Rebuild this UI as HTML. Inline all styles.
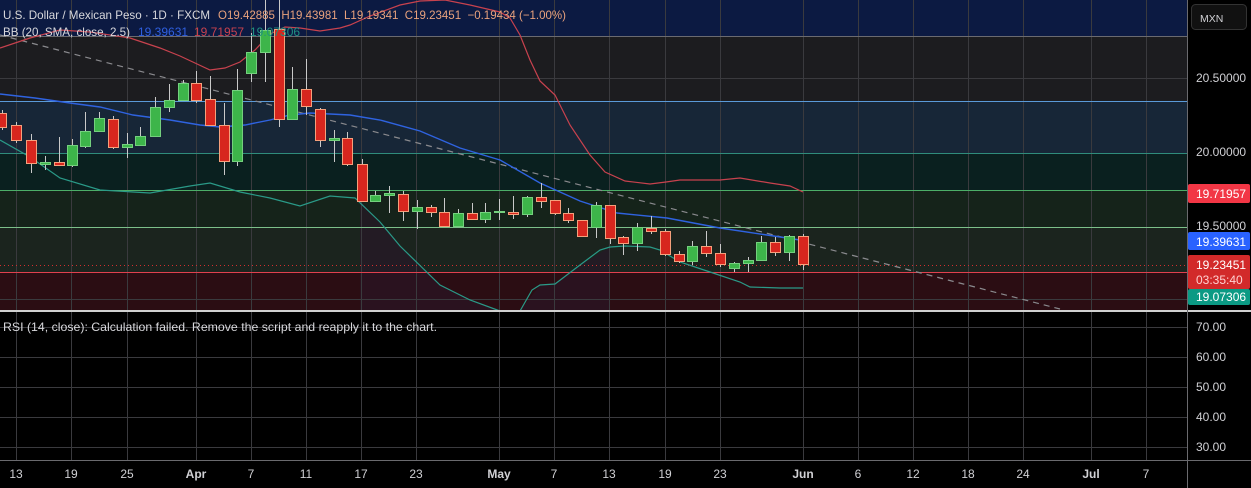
<!DOCTYPE html>
<html><head><meta charset="utf-8"><style>
html,body{margin:0;padding:0;background:#000;width:1251px;height:488px;overflow:hidden}
svg{display:block;font-family:"Liberation Sans",sans-serif}
</style></head><body>
<svg width="1251" height="488" viewBox="0 0 1251 488">
<rect x="0" y="0" width="1187" height="36" fill="#0c1a42"/>
<rect x="0" y="36" width="1187" height="66" fill="#1c1c1f"/>
<rect x="0" y="102" width="1187" height="51" fill="#172637"/>
<rect x="0" y="153" width="1187" height="37" fill="#0a201f"/>
<rect x="0" y="190" width="1187" height="37" fill="#15231a"/>
<rect x="0" y="227" width="1187" height="45" fill="#1b241e"/>
<rect x="0" y="272" width="1187" height="39" fill="#2b0d13"/>
<path d="M360,200 L400,246 440,285 470,300 500,311 520,311 540,285 555,284 580,265 610,247 L610,311 360,311Z" fill="#2a1628" opacity="0.6"/>
<g stroke="#3a3a3e" stroke-width="1">
<line x1="16.5" y1="0" x2="16.5" y2="460"/><line x1="71.5" y1="0" x2="71.5" y2="460"/><line x1="127.5" y1="0" x2="127.5" y2="460"/><line x1="196.5" y1="0" x2="196.5" y2="460"/><line x1="251.5" y1="0" x2="251.5" y2="460"/><line x1="306.5" y1="0" x2="306.5" y2="460"/><line x1="361.5" y1="0" x2="361.5" y2="460"/><line x1="416.5" y1="0" x2="416.5" y2="460"/><line x1="499.5" y1="0" x2="499.5" y2="460"/><line x1="554.5" y1="0" x2="554.5" y2="460"/><line x1="609.5" y1="0" x2="609.5" y2="460"/><line x1="665.5" y1="0" x2="665.5" y2="460"/><line x1="720.5" y1="0" x2="720.5" y2="460"/><line x1="803.5" y1="0" x2="803.5" y2="460"/><line x1="858.5" y1="0" x2="858.5" y2="460"/><line x1="913.5" y1="0" x2="913.5" y2="460"/><line x1="968.5" y1="0" x2="968.5" y2="460"/><line x1="1023.5" y1="0" x2="1023.5" y2="460"/><line x1="1091.5" y1="0" x2="1091.5" y2="460"/><line x1="1146.5" y1="0" x2="1146.5" y2="460"/>
<line x1="0" y1="78.5" x2="1187" y2="78.5"/><line x1="0" y1="299.5" x2="1187" y2="299.5"/>
<line x1="0" y1="327.5" x2="1187" y2="327.5"/><line x1="0" y1="357.5" x2="1187" y2="357.5"/><line x1="0" y1="387.5" x2="1187" y2="387.5"/><line x1="0" y1="417.5" x2="1187" y2="417.5"/><line x1="0" y1="447.5" x2="1187" y2="447.5"/>
</g>
<line x1="0" y1="36.5" x2="1187" y2="36.5" stroke="#6a6a70"/>
<line x1="0" y1="101.5" x2="1187" y2="101.5" stroke="#5a9ad8"/>
<line x1="0" y1="153.5" x2="1187" y2="153.5" stroke="#2f8c7c"/>
<line x1="0" y1="190.5" x2="1187" y2="190.5" stroke="#4cae68"/>
<line x1="0" y1="227.5" x2="1187" y2="227.5" stroke="#7cc08a"/>
<line x1="0" y1="272.5" x2="1187" y2="272.5" stroke="#e0404e"/>
<line x1="0" y1="265.5" x2="1187" y2="265.5" stroke="#d32f2f" stroke-dasharray="1,3"/>
<line x1="0" y1="35" x2="1060" y2="309" stroke="#8a8a8e" stroke-width="1.2" stroke-dasharray="6,5"/>
<polyline fill="none" stroke="#c8424e" stroke-width="1.2" points="0,48 30,38 60,30 90,32 130,38 160,48 180,56 210,70 225,68 240,62 255,50 270,34 285,27 300,28 320,31 340,28 350,25 370,16 400,5 420,1 445,0 470,5 500,12 510,18 520,35 530,60 540,81 555,95 570,125 590,155 605,172 625,181 650,184 666,182 680,180 720,180 740,178 770,183 790,186 803,192"/>
<polyline fill="none" stroke="#2f63e0" stroke-width="1.4" points="0,94 35,98 70,103 100,107 133,115 170,120 200,125 220,127 245,125 270,120 290,115 310,113 350,115 380,120 420,131 460,148 500,160 540,183 580,201 617,213 667,218 720,228 767,235 800,240"/>
<polyline fill="none" stroke="#2a9a88" stroke-width="1.2" points="0,140 30,157 60,178 100,190 150,193 190,186 210,183 240,192 270,198 300,206 330,196 355,198 380,222 400,246 440,285 470,300 500,311 520,311 532,290 540,285 555,284 580,265 600,250 610,247 625,246 650,247 660,250 680,262 710,272 740,282 750,287 780,288 803,288"/>
<g>
<g stroke="#c9c9c9">
<line x1="2.5" y1="110" x2="2.5" y2="130"/><line x1="16.5" y1="122" x2="16.5" y2="143"/><line x1="31.5" y1="134" x2="31.5" y2="173"/><line x1="45.5" y1="156" x2="45.5" y2="170"/><line x1="59.5" y1="137" x2="59.5" y2="166"/><line x1="72.5" y1="139" x2="72.5" y2="167"/><line x1="85.5" y1="112" x2="85.5" y2="148"/><line x1="99.5" y1="112" x2="99.5" y2="132"/><line x1="113.5" y1="116" x2="113.5" y2="149"/><line x1="127.5" y1="133" x2="127.5" y2="158"/><line x1="140.5" y1="127" x2="140.5" y2="146"/><line x1="155.5" y1="97" x2="155.5" y2="137"/><line x1="169.5" y1="84" x2="169.5" y2="112"/><line x1="183.5" y1="80" x2="183.5" y2="101"/><line x1="196.5" y1="71" x2="196.5" y2="103"/><line x1="210.5" y1="76" x2="210.5" y2="126"/><line x1="224.5" y1="103" x2="224.5" y2="175"/><line x1="237.5" y1="69" x2="237.5" y2="166"/><line x1="251.5" y1="33" x2="251.5" y2="82"/><line x1="265.5" y1="0" x2="265.5" y2="82"/><line x1="279.5" y1="0" x2="279.5" y2="127"/><line x1="292.5" y1="67" x2="292.5" y2="119"/><line x1="306.5" y1="59" x2="306.5" y2="115"/><line x1="320.5" y1="108" x2="320.5" y2="147"/><line x1="334.5" y1="130" x2="334.5" y2="162"/><line x1="347.5" y1="132" x2="347.5" y2="166"/><line x1="362.5" y1="159" x2="362.5" y2="202"/><line x1="375.5" y1="191" x2="375.5" y2="202"/><line x1="389.5" y1="186" x2="389.5" y2="213"/><line x1="403.5" y1="191" x2="403.5" y2="221"/><line x1="417.5" y1="200" x2="417.5" y2="229"/><line x1="431.5" y1="205" x2="431.5" y2="217"/><line x1="444.5" y1="198" x2="444.5" y2="227"/><line x1="458.5" y1="209" x2="458.5" y2="227"/><line x1="472.5" y1="203" x2="472.5" y2="220"/><line x1="485.5" y1="203" x2="485.5" y2="223"/><line x1="499.5" y1="199" x2="499.5" y2="220"/><line x1="513.5" y1="196" x2="513.5" y2="219"/><line x1="527.5" y1="196" x2="527.5" y2="217"/><line x1="541.5" y1="183" x2="541.5" y2="208"/><line x1="555.5" y1="200" x2="555.5" y2="215"/><line x1="568.5" y1="208" x2="568.5" y2="223"/><line x1="582.5" y1="220" x2="582.5" y2="237"/><line x1="596.5" y1="202" x2="596.5" y2="238"/><line x1="610.5" y1="205" x2="610.5" y2="244"/><line x1="623.5" y1="236" x2="623.5" y2="255"/><line x1="637.5" y1="223" x2="637.5" y2="251"/><line x1="651.5" y1="216" x2="651.5" y2="234"/><line x1="665.5" y1="229" x2="665.5" y2="256"/><line x1="679.5" y1="251" x2="679.5" y2="263"/><line x1="692.5" y1="241" x2="692.5" y2="265"/><line x1="706.5" y1="231" x2="706.5" y2="257"/><line x1="720.5" y1="244" x2="720.5" y2="267"/><line x1="734.5" y1="262" x2="734.5" y2="272"/><line x1="748.5" y1="257" x2="748.5" y2="272"/><line x1="761.5" y1="236" x2="761.5" y2="261"/><line x1="775.5" y1="237" x2="775.5" y2="256"/><line x1="789.5" y1="235" x2="789.5" y2="261"/><line x1="803.5" y1="234" x2="803.5" y2="270"/>
</g>
<g fill="#3db54a" stroke="#74d07e">
<rect x="40.5" y="162.5" width="10" height="2"/><rect x="67.5" y="145.5" width="10" height="20"/><rect x="80.5" y="131.5" width="10" height="15"/><rect x="94.5" y="118.5" width="10" height="13"/><rect x="122.5" y="144.5" width="10" height="3"/><rect x="135.5" y="136.5" width="10" height="9"/><rect x="150.5" y="107.5" width="10" height="29"/><rect x="164.5" y="100.5" width="10" height="7"/><rect x="178.5" y="83.5" width="10" height="17"/><rect x="232.5" y="90.5" width="10" height="71"/><rect x="246.5" y="52.5" width="10" height="21"/><rect x="260.5" y="30.5" width="10" height="22"/><rect x="287.5" y="89.5" width="10" height="30"/><rect x="329.5" y="138.5" width="10" height="2"/><rect x="370.5" y="195.5" width="10" height="6"/><rect x="384.5" y="193.5" width="10" height="2"/><rect x="412.5" y="207.5" width="10" height="4"/><rect x="453.5" y="213.5" width="10" height="13"/><rect x="480.5" y="212.5" width="10" height="7"/><rect x="494.5" y="211.5" width="10" height="1"/><rect x="522.5" y="197.5" width="10" height="17"/><rect x="591.5" y="205.5" width="10" height="22"/><rect x="632.5" y="227.5" width="10" height="16"/><rect x="687.5" y="246.5" width="10" height="15"/><rect x="729.5" y="263.5" width="10" height="5"/><rect x="743.5" y="260.5" width="10" height="3"/><rect x="756.5" y="242.5" width="10" height="18"/><rect x="784.5" y="236.5" width="10" height="16"/>
</g>
<g fill="#d7261e" stroke="#f5a07c">
<rect x="-3.5" y="113.5" width="10" height="14"/><rect x="11.5" y="125.5" width="10" height="15"/><rect x="26.5" y="140.5" width="10" height="23"/><rect x="54.5" y="162.5" width="10" height="3"/><rect x="108.5" y="119.5" width="10" height="28"/><rect x="191.5" y="83.5" width="10" height="17"/><rect x="205.5" y="99.5" width="10" height="26"/><rect x="219.5" y="125.5" width="10" height="36"/><rect x="274.5" y="29.5" width="10" height="90"/><rect x="301.5" y="89.5" width="10" height="17"/><rect x="315.5" y="109.5" width="10" height="31"/><rect x="342.5" y="138.5" width="10" height="26"/><rect x="357.5" y="164.5" width="10" height="37"/><rect x="398.5" y="194.5" width="10" height="17"/><rect x="426.5" y="207.5" width="10" height="5"/><rect x="439.5" y="212.5" width="10" height="14"/><rect x="467.5" y="213.5" width="10" height="6"/><rect x="508.5" y="212.5" width="10" height="2"/><rect x="536.5" y="197.5" width="10" height="4"/><rect x="550.5" y="200.5" width="10" height="13"/><rect x="563.5" y="213.5" width="10" height="7"/><rect x="577.5" y="220.5" width="10" height="16"/><rect x="605.5" y="205.5" width="10" height="33"/><rect x="618.5" y="237.5" width="10" height="6"/><rect x="646.5" y="228.5" width="10" height="3"/><rect x="660.5" y="231.5" width="10" height="23"/><rect x="674.5" y="254.5" width="10" height="7"/><rect x="701.5" y="246.5" width="10" height="7"/><rect x="715.5" y="253.5" width="10" height="11"/><rect x="770.5" y="242.5" width="10" height="10"/><rect x="798.5" y="236.5" width="10" height="28"/>
</g>
</g>
<g font-size="12">
<text x="3" y="19" fill="#d8d8dc" textLength="207" lengthAdjust="spacingAndGlyphs">U.S. Dollar / Mexican Peso · 1D · FXCM</text>
<text x="218" y="19" fill="#e9a27d" xml:space="preserve" textLength="348" lengthAdjust="spacingAndGlyphs">O19.42885  H19.43981  L19.19341  C19.23451  −0.19434 (−1.00%)</text>
<text x="3" y="36" fill="#d8d8dc" textLength="127" lengthAdjust="spacingAndGlyphs">BB (20, SMA, close, 2.5)</text>
<text x="138" y="36" fill="#2f5fe0">19.39631</text>
<text x="194" y="36" fill="#c8424e">19.71957</text>
<text x="250" y="36" fill="#1f9080">19.07306</text>
<text x="3" y="331" fill="#d8d8dc" font-size="12" textLength="434" lengthAdjust="spacingAndGlyphs">RSI (14, close): Calculation failed. Remove the script and reapply it to the chart.</text>
</g>
<rect x="0" y="310" width="1251" height="2" fill="#d0d0d0"/>
<line x1="0" y1="460.5" x2="1251" y2="460.5" stroke="#6a6a6e"/>
<rect x="1188" y="0" width="63" height="310" fill="#000"/>
<rect x="1188" y="312" width="63" height="148" fill="#000"/>
<line x1="1187.5" y1="0" x2="1187.5" y2="488" stroke="#6a6a6e"/>
<rect x="1191.5" y="4.5" width="55" height="25" rx="4" fill="#111" stroke="#333"/>
<g font-size="12" fill="#d0d0d4">
<text x="1200" y="22" font-size="10.5">MXN</text>
<text x="1196" y="82">20.50000</text>
<text x="1196" y="156">20.00000</text>
<text x="1196" y="230">19.50000</text>
<text x="1196" y="331">70.00</text>
<text x="1196" y="361">60.00</text>
<text x="1196" y="391">50.00</text>
<text x="1196" y="421">40.00</text>
<text x="1196" y="451">30.00</text>
</g>
<rect x="1188" y="184" width="62" height="19" rx="2" fill="#f23645"/>
<rect x="1188" y="232" width="62" height="18" rx="2" fill="#2962ff"/>
<rect x="1188" y="255" width="62" height="34" rx="2" fill="#d22a2a"/>
<rect x="1188" y="289" width="62" height="16" rx="2" fill="#0b9a84"/>
<g font-size="12" fill="#ffffff">
<text x="1196" y="198">19.71957</text>
<text x="1196" y="246">19.39631</text>
<text x="1196" y="269">19.23451</text>
<text x="1196" y="284" fill="#ffd0d0">03:35:40</text>
<text x="1196" y="301">19.07306</text>
</g>
<g font-size="12" fill="#d0d0d4" text-anchor="middle">
<text x="16" y="478">13</text><text x="71" y="478">19</text><text x="127" y="478">25</text><text x="196" y="478" font-weight="bold">Apr</text><text x="251" y="478">7</text><text x="306" y="478">11</text><text x="361" y="478">17</text><text x="416" y="478">23</text><text x="499" y="478" font-weight="bold">May</text><text x="554" y="478">7</text><text x="609" y="478">13</text><text x="665" y="478">19</text><text x="720" y="478">23</text><text x="803" y="478" font-weight="bold">Jun</text><text x="858" y="478">6</text><text x="913" y="478">12</text><text x="968" y="478">18</text><text x="1023" y="478">24</text><text x="1091" y="478" font-weight="bold">Jul</text><text x="1146" y="478">7</text>
</g>
</svg>
</body></html>
